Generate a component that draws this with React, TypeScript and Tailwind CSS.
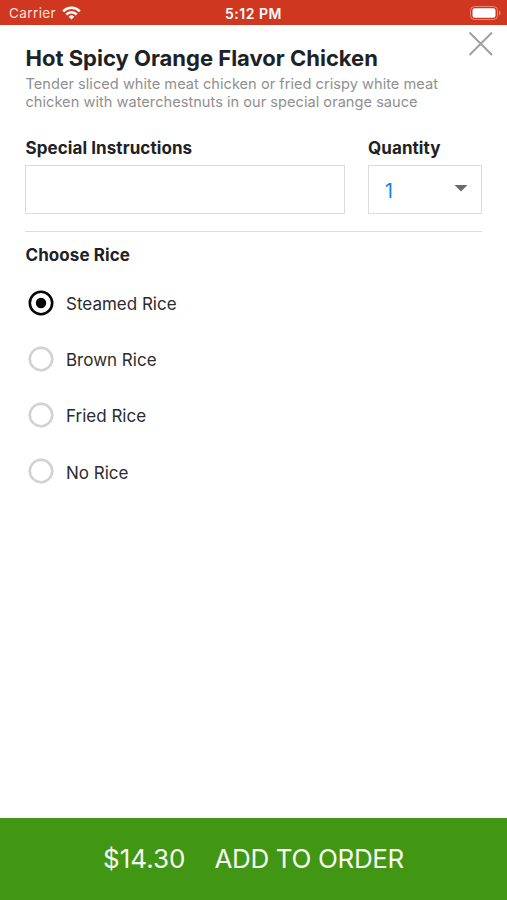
import React, { useState } from "react";

const riceOptions = ["Steamed Rice", "Brown Rice", "Fried Rice", "No Rice"];

const StatusBar: React.FC = () => (
  <header className="grid h-[25px] grid-cols-3 items-center bg-[#cf3720] text-[13.5px] leading-none text-white">
    <div className="flex items-center gap-[6px] pt-[3px] pl-[9px] text-[#fbe3df]">
      <span className="tracking-[0.4px]">Carrier</span>
      <svg className="-mt-[2px]" width="19" height="14" viewBox="0 0 19 14" fill="none" stroke="white" strokeWidth="2.5">
        <path d="M1.2 5.3a11.7 11.7 0 0 1 16.6 0" />
        <path d="M4.3 8.5a7.3 7.3 0 0 1 10.4 0" />
        <path d="M9.5 13.6 6.7 10.7a4 4 0 0 1 5.6 0Z" fill="white" stroke="none" />
      </svg>
    </div>
    <span className="pt-[3px] text-center text-[14px] font-semibold tracking-[0.5px]">5:12 PM</span>
    <div className="flex justify-end pt-[1px] pr-[6px]">
      <svg width="31" height="14" viewBox="0 0 31 14">
        <rect x="0.5" y="0.5" width="27" height="13" rx="4" fill="none" stroke="#e48a7c" />
        <rect x="2.5" y="2.3" width="23" height="9.4" rx="2.2" fill="white" />
        <path d="M29 4.5c2 1 2 4 0 5Z" fill="#e48a7c" />
      </svg>
    </div>
  </header>
);

const App: React.FC = () => {
  const [rice, setRice] = useState(riceOptions[0]);

  return (
    <div className="flex h-[900px] w-[507px] flex-col bg-white font-['Inter',sans-serif] text-[#202124]">
      <StatusBar />
      <main className="flex-1 px-[25px]">
        <div className="flex h-[106px] justify-between">
          <div className="pt-[19px] pl-[0.5px]">
            <h1 className="text-[22px] leading-[28px] font-bold whitespace-nowrap">
              Hot Spicy Orange Flavor Chicken
            </h1>
            <p className="mt-[3px] text-[14.6px] leading-[18px] tracking-[0.02px] whitespace-nowrap text-[#8f8f8f]">
              Tender sliced white meat chicken or fried crispy white meat
              <br />
              chicken with waterchestnuts in our special orange sauce
            </p>
          </div>
          <button className="-mr-[11px] h-[24px] w-[24px] pt-[7px]" aria-label="Close">
            <svg width="24" height="24" viewBox="0 0 24 24" stroke="#a0a0a0" strokeWidth="2">
              <path d="M0.5 0.5 23 23M23 0.5 0.5 23" />
            </svg>
          </button>
        </div>

        <div className="flex gap-[23px]">
          <div className="w-[320px]">
            <h2 className="pt-[6px] pl-[0.5px] text-[17px] leading-[22px] font-bold tracking-[0.08px]">
              Special Instructions
            </h2>
            <input className="mt-[6px] block h-[49px] w-full border border-[#dcdcdc] px-4" />
          </div>
          <div className="w-[114px]">
            <h2 className="pt-[6px] text-[17px] leading-[22px] font-bold tracking-[0.08px]">Quantity</h2>
            <button className="mt-[6px] flex h-[49px] w-full items-center justify-between border border-[#dcdcdc] pr-[13px] pl-[16px] text-[19.5px] text-[#1683e0]">
              <span className="pt-[4px]">1</span>
              <svg className="-mt-[2px]" width="14" height="7" viewBox="0 0 14 7">
                <path d="M0.5 0h13L7 6.5Z" fill="#6b6b6b" />
              </svg>
            </button>
          </div>
        </div>

        <section className="mt-[17px] border-t border-[#dcdcdc] pt-[12px]">
          <h2 className="pl-[0.5px] text-[17px] leading-[22px] font-bold tracking-[0.08px]">Choose Rice</h2>
          <div className="mt-[8.7px]">
            {riceOptions.map((name) => (
              <button
                key={name}
                onClick={() => setRice(name)}
                className="flex h-[56.2px] w-full items-center gap-[12px] pl-[3px] text-[17px] text-[#2b2b2d]"
              >
                <svg width="26" height="26" viewBox="0 0 26 26" fill="none">
                  <circle cx="13" cy="13" r="11.2" stroke={rice === name ? "#050505" : "#d2d2d2"} strokeWidth="2.6" />
                  {rice === name && <circle cx="13" cy="13" r="5.2" fill="#050505" />}
                </svg>
                <span className="pt-[4px]">{name}</span>
              </button>
            ))}
          </div>
        </section>
      </main>
      <button className="flex h-[82px] items-center justify-center gap-[29px] bg-[#419613] pb-[1px] text-[26px] text-[#f6fbf3]">
        <span>$14.30</span>
        <span className="tracking-[-0.35px]">ADD TO ORDER</span>
      </button>
    </div>
  );
};

export default App;
